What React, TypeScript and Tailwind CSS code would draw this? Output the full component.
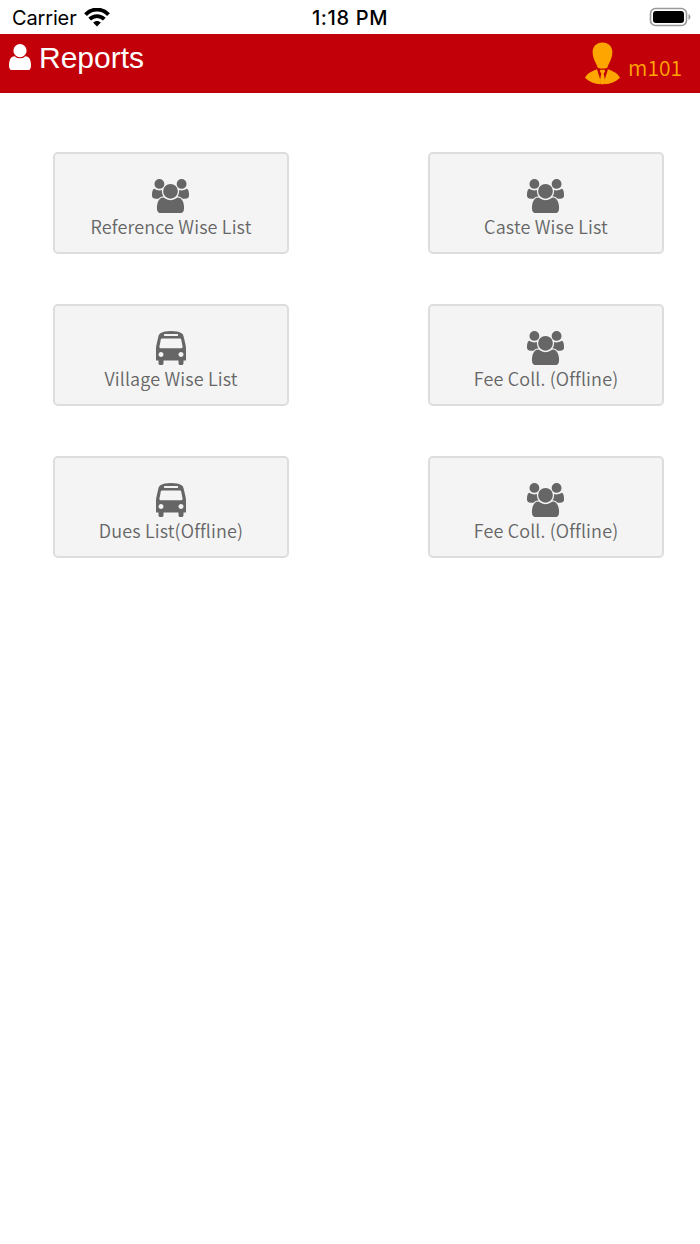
import React from "react";

const USERS =
  "M593 896q-162 5-265 128h-134q-82 0-138-40.500t-56-118.500q0-353 124-353 6 0 43.500 21t97.500 42.500 119 21.500q67 0 133-23-5 37-5 66 0 139 81 256zm1071 637q0 120-73 189.500t-194 69.500h-874q-121 0-194-69.500t-73-189.500q0-53 3.500-103.500t14-109 26.500-108.500 43-97.500 62-81 85.500-53.500 111.500-20q10 0 43 21.500t73 48 107 48 135 21.500 135-21.500 107-48 73-48 43-21.500q61 0 111.500 20t85.500 53.500 62 81 43 97.500 26.500 108.500 14 109 3.500 103.500zm-1024-1277q0 106-75 181t-181 75-181-75-75-181 75-181 181-75 181 75 75 181zm704 384q0 159-112.500 271.500t-271.500 112.500-271.500-112.500-112.500-271.500 112.500-271.500 271.500-112.500 271.500 112.500 112.500 271.500zm576 225q0 78-56 118.500t-138 40.500h-134q-103-123-265-128 81-117 81-256 0-29-5-66 66 23 133 23 59 0 119-21.500t97.500-42.500 43.500-21q124 0 124 353zm-128-609q0 106-75 181t-181 75-181-75-75-181 75-181 181-75 181 75 75 181z";
const BUS =
  "M384 1216q0-53-37.500-90.500t-90.500-37.500-90.500 37.500-37.500 90.500 37.500 90.500 90.500 37.500 90.500-37.500 37.500-90.500zm1024 0q0-53-37.500-90.500t-90.500-37.500-90.500 37.500-37.500 90.500 37.500 90.500 90.500 37.500 90.500-37.500 37.500-90.500zm-46-396l-72-384q-5-23-22.500-37.500t-40.500-14.500h-918q-23 0-40.500 14.500t-22.500 37.500l-72 384q-5 30 14 53t49 23h1062q30 0 49-23t14-53zm-226-612q0-20-14-34t-34-14h-640q-20 0-34 14t-14 34 14 34 34 14h640q20 0 34-14t14-34zm400 725v603h-128v128q0 53-37.500 90.500t-90.500 37.500-90.500-37.500-37.500-90.500v-128h-768v128q0 53-37.500 90.500t-90.500 37.500-90.500-37.500-37.500-90.500v-128h-128v-603q0-112 25-223l103-454q9-78 97.500-137t230-89 312.500-30 312.500 30 230 89 97.500 137l105 454q23 102 23 223z";
const USER =
  "M1536 1399q0 109-62.500 187t-150.500 78h-854q-88 0-150.500-78t-62.500-187q0-85 8.500-160.500t31.500-152 58.500-131 94-89 134.500-34.500q131 128 313 128t313-128q76 0 134.500 34.500t94 89 58.500 131 31.500 152 8.500 160.500zm-256-887q0 159-112.500 271.500t-271.500 112.500-271.500-112.500-112.500-271.500 112.500-271.500 271.500-112.500 271.500 112.500 112.500 271.500z";

type Report = { label: string; icon: "users" | "bus" };

const reports: Report[] = [
  { label: "Reference Wise List", icon: "users" },
  { label: "Caste Wise List", icon: "users" },
  { label: "Village Wise List", icon: "bus" },
  { label: "Fee Coll. (Offline)", icon: "users" },
  { label: "Dues List(Offline)", icon: "bus" },
  { label: "Fee Coll. (Offline)", icon: "users" },
];

function StatusBar() {
  return (
    <div className="grid h-[34px] grid-cols-3 items-center px-3 font-['Inter',sans-serif] text-black">
      <div className="flex items-center gap-[7px]">
        <span className="pt-0.5 text-[20px] leading-6 tracking-[-0.15px]">Carrier</span>
        <svg className="h-[19px] w-[26px]" viewBox="0 0 26 19" fill="none" stroke="#000" strokeWidth="3.9">
          <path d="M1.500 6.600C8-.1 18-.1 24.500 6.600" />
          <path d="M5.700 11.200c4.200-4.100 10.400-4.100 14.600 0" />
          <path d="M9.100 14.600c2.200-2.100 5.600-2.100 7.800 0L13 18.500z" fill="#000" stroke="none" />
        </svg>
      </div>
      <div className="pt-0.5 text-center text-[20px] font-medium leading-6 tracking-[0.65px]">1:18 PM</div>
      <svg className="mr-[-3px] h-5 w-[42px] justify-self-end" viewBox="0 0 42 20">
        <rect x="1.500" y="1.500" width="36" height="17" rx="5" fill="none" stroke="#999" strokeWidth="1.600" />
        <rect x="4" y="4" width="31" height="12" rx="3" />
        <path d="M39.500 7q2 1 2 3t-2 3z" fill="#999" />
      </svg>
    </div>
  );
}

function Header() {
  return (
    <header className="flex h-[59px] justify-between bg-[#c20009] pl-[9px] pr-[18px]">
      <div className="flex items-start gap-2 text-white">
        <svg className="mt-[9.5px] h-[26.5px] w-[22px]" viewBox="256 128 1280 1536" preserveAspectRatio="none" fill="currentColor">
          <path d={USER} />
        </svg>
        <h1 className="mt-1 font-['Liberation_Sans',sans-serif] text-[30px] leading-10">Reports</h1>
      </div>
      <div className="flex items-start gap-2 text-[#ffa500]">
        <svg className="mt-2 h-[43px] w-[35px]" viewBox="0 0 35 43" fill="currentColor">
          <path d="M17.500.4c6.200 0 9.900 4.200 9.900 9.900 0 5-2.200 9-4.100 12.600-.6 1.500-.7 2.700-1.600 3.100q-4.200 1.200-8.400 0c-.9-.4-1-1.600-1.600-3.100C9.800 19.300 7.600 15.300 7.600 10.300 7.600 4.600 11.300.4 17.500.4z" />
          <path d="M12 27.200 16 40 15.600 42.200C9.500 41.800 4.300 39.800 0 35.700c2.200-4.500 6.800-6.500 12-8.500zM23 27.200 19 40l.4 2.200c6.100-.4 11.300-2.400 15.600-6.500-2.200-4.500-6.800-6.500-12-8.500z" />
          <path d="M15.400 27.800h4.200l.5 1.600-1.400 2.200 1.300 6.400-1 4.300h-3l-1-4.300 1.300-6.400-1.400-2.200z" />
        </svg>
        <span className="mt-[17px] font-['Noto_Sans_CJK_SC',sans-serif] text-[21px] leading-8 [font-weight:350]">m101</span>
      </div>
    </header>
  );
}

function ReportCard({ label, icon }: Report) {
  return (
    <button className="flex h-[102px] w-[236px] flex-col items-center rounded-[5px] border-2 border-[#ddd] bg-[#f4f4f4] pt-[24.5px] text-[#666]">
      {icon === "users" ? (
        <svg className="mr-px h-[34.5px] w-[37px]" viewBox="0 0 1920 1792" preserveAspectRatio="none" fill="currentColor">
          <path d={USERS} />
        </svg>
      ) : (
        <svg className="h-[34.5px] w-[30px]" viewBox="0 0 1536 1792" preserveAspectRatio="none" fill="currentColor">
          <path d={BUS} />
        </svg>
      )}
      <span className="-mt-px font-['Noto_Sans_CJK_SC',sans-serif] text-[18px] leading-7 tracking-[0.15px] [font-weight:350]">
        {label}
      </span>
    </button>
  );
}

export default function App() {
  return (
    <div className="min-h-[1244px] w-[700px] bg-white">
      <StatusBar />
      <Header />
      <main className="grid grid-cols-[236px_236px] gap-x-[139px] gap-y-[50px] pl-[53px] pt-[59px]">
        {reports.map((r, i) => (
          <ReportCard key={i} {...r} />
        ))}
      </main>
    </div>
  );
}
